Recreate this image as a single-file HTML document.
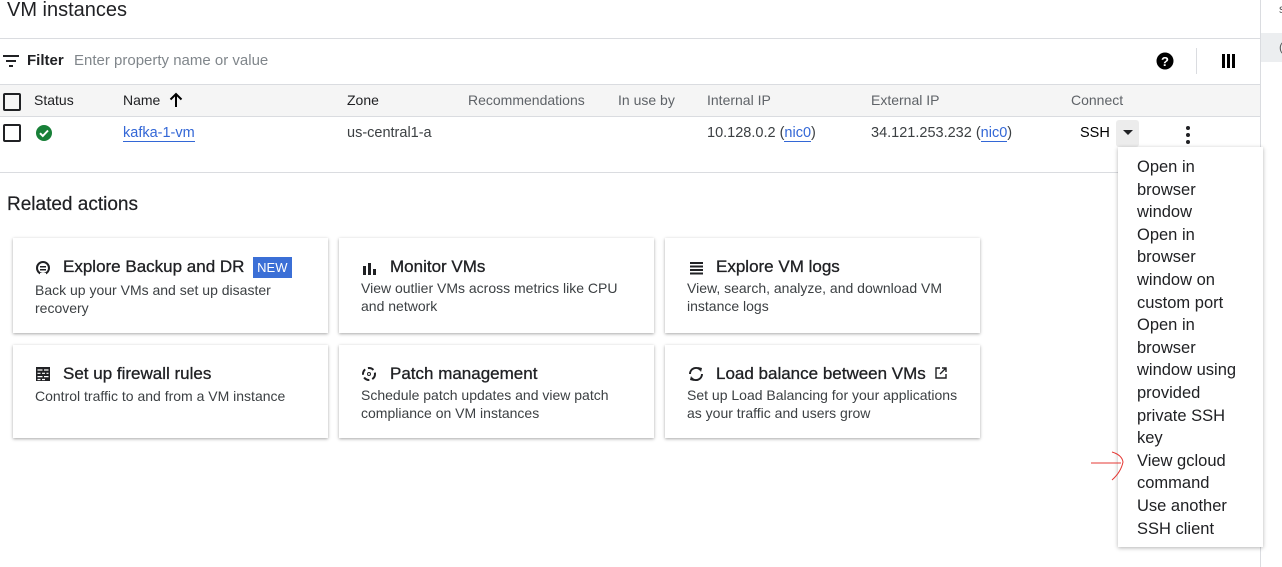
<!DOCTYPE html>
<html><head><meta charset="utf-8"><style>
*{box-sizing:border-box;margin:0;padding:0}
body{width:1282px;height:567px;overflow:hidden;background:#fff;font-family:"Liberation Sans",Arial,sans-serif;color:#202124;position:relative}
.a{position:absolute}
.hl{position:absolute;height:1px;background:#dadce0}
.th{position:absolute;top:92px;font-size:14px;color:#5f6368}
.td{position:absolute;top:125px;font-size:14.5px;color:#3c4043}
.lk{color:#3367d6;border-bottom:1px solid #3367d6}
.card{position:absolute;width:315px;background:#fff;box-shadow:0 1px 3px rgba(0,0,0,.35)}
.card h3{position:absolute;left:50px;top:19px;font-size:17px;font-weight:normal;color:#202124;-webkit-text-stroke:0.3px #202124}
.card p{position:absolute;left:22px;top:42px;font-size:14px;line-height:18px;color:#3c4043;width:260px}
.card svg{position:absolute;left:22px;top:22px}
.cb{position:absolute;width:18px;height:18px;border:2px solid #202124;border-radius:2px}
</style></head><body>
<div class="a" style="left:7px;top:-1px;font-size:20px;color:#202124">VM instances</div>
<div class="hl" style="left:0;top:38px;width:1260px"></div>
<svg class="a" style="left:3px;top:54px" width="16" height="14" viewBox="0 0 16 14"><rect x="0" y="1" width="16" height="2" fill="#202124"/><rect x="3" y="6" width="10" height="2" fill="#202124"/><rect x="6" y="11" width="4" height="2" fill="#202124"/></svg>
<div class="a" style="left:27px;top:52px;font-size:15px;font-weight:bold">Filter</div>
<div class="a" style="left:74px;top:52px;font-size:15px;color:#80868b">Enter property name or value</div>
<svg class="a" style="left:1156px;top:52px" width="18" height="18" viewBox="0 0 18 18"><circle cx="9" cy="9" r="8.5" fill="#000"/><text x="9" y="14" font-size="13" font-weight="bold" fill="#fff" text-anchor="middle" font-family="Liberation Sans">?</text></svg>
<div class="a" style="left:1196px;top:48px;width:1px;height:26px;background:#dadce0"></div>
<div class="a" style="left:1222px;top:54px;width:3px;height:14px;background:#000"></div>
<div class="a" style="left:1227px;top:54px;width:3px;height:14px;background:#000"></div>
<div class="a" style="left:1232px;top:54px;width:3px;height:14px;background:#000"></div>
<div class="a" style="left:0;top:84px;width:1260px;height:33px;background:#f5f5f5;border-top:1px solid #dadce0;border-bottom:1px solid #dadce0"></div>
<div class="cb" style="left:3px;top:93px"></div>
<div class="th" style="left:34px;color:#202124">Status</div>
<div class="th" style="left:123px;color:#202124">Name</div>
<svg class="a" style="left:169px;top:92px" width="14" height="16" viewBox="0 0 14 16"><path d="M7 15V2M1.5 7.5L7 2l5.5 5.5" stroke="#000" stroke-width="2" fill="none"/></svg>
<div class="th" style="left:347px;color:#202124">Zone</div>
<div class="th" style="left:468px">Recommendations</div>
<div class="th" style="left:618px">In use by</div>
<div class="th" style="left:707px">Internal IP</div>
<div class="th" style="left:871px">External IP</div>
<div class="th" style="left:1071px">Connect</div>
<div class="cb" style="left:3px;top:124px"></div>
<svg class="a" style="left:35px;top:124px" width="18" height="18" viewBox="0 0 18 18"><circle cx="9" cy="9" r="8" fill="#188038"/><path d="M5 9.2l2.8 2.8L13 6.5" stroke="#fff" stroke-width="2" fill="none"/></svg>
<div class="td" style="left:123px"><span class="lk">kafka-1-vm</span></div>
<div class="td" style="left:347px">us-central1-a</div>
<div class="td" style="left:707px">10.128.0.2 (<span class="lk">nic0</span>)</div>
<div class="td" style="left:871px">34.121.253.232 (<span class="lk">nic0</span>)</div>
<div class="td" style="left:1080px;color:#000">SSH</div>
<div class="a" style="left:1116px;top:120px;width:23px;height:27px;background:#ececec;border-radius:3px"></div>
<svg class="a" style="left:1123px;top:130px" width="10" height="6"><path d="M0 0h10L5 5z" fill="#202124"/></svg>
<div class="a" style="left:1186px;top:126px;width:4px;height:4px;border-radius:2px;background:#202124"></div>
<div class="a" style="left:1186px;top:133px;width:4px;height:4px;border-radius:2px;background:#202124"></div>
<div class="a" style="left:1186px;top:140px;width:4px;height:4px;border-radius:2px;background:#202124"></div>
<div class="hl" style="left:0;top:172px;width:1260px"></div>
<div class="a" style="left:7px;top:194px;font-size:19px;color:#202124;-webkit-text-stroke:0.2px #202124">Related actions</div>

<div class="card" style="left:13px;top:238px;height:95px"><svg width="16" height="16" viewBox="0 0 16 16"><circle cx="8" cy="8" r="6" stroke="#202124" stroke-width="2" fill="none"/><rect x="5" y="6" width="6" height="1.5" fill="#202124"/><rect x="5" y="9" width="6" height="1.5" fill="#202124"/><rect x="5" y="13" width="6" height="3" fill="#fff"/></svg><h3>Explore Backup and DR <span style="background:#3b6fd6;color:#fff;font-size:13px;padding:3px 4px;margin-left:4px;-webkit-text-stroke:0">NEW</span></h3><p style="top:43px">Back up your VMs and set up disaster recovery</p></div>
<div class="card" style="left:339px;top:238px;height:95px"><svg width="16" height="16" viewBox="0 0 16 16"><rect x="2" y="6" width="3" height="9" fill="#202124"/><rect x="7" y="3" width="3" height="12" fill="#202124"/><rect x="12" y="9" width="3" height="6" fill="#202124"/></svg><h3 style="left:51px">Monitor VMs</h3><p style="top:41px;width:272px">View outlier VMs across metrics like CPU and network</p></div>
<div class="card" style="left:665px;top:238px;height:95px"><svg width="16" height="16" viewBox="0 0 16 16"><rect x="3" y="2" width="13" height="2" fill="#202124"/><rect x="3" y="5.5" width="13" height="2" fill="#202124"/><rect x="3" y="9" width="13" height="2" fill="#202124"/><rect x="3" y="12.5" width="13" height="2" fill="#202124"/></svg><h3 style="left:51px">Explore VM logs</h3><p style="top:41px">View, search, analyze, and download VM instance logs</p></div>

<div class="card" style="left:13px;top:345px;height:93px"><svg width="16" height="16" viewBox="0 0 16 16" style="top:21px"><path d="M1 1h14v14H1z" fill="#202124"/><path d="M2.5 4h5M9 4h4.5M2.5 7.3h3M7 7.3h3M11.5 7.3h2M2.5 10.6h5M9 10.6h4.5M2.5 13.5h3M7 13.5h3" stroke="#fff" stroke-width="1.2"/></svg><h3>Set up firewall rules</h3><p>Control traffic to and from a VM instance</p></div>
<div class="card" style="left:339px;top:345px;height:93px"><svg width="16" height="16" viewBox="0 0 16 16" style="top:21px"><circle cx="8" cy="8" r="6" stroke="#202124" stroke-width="2" fill="none" stroke-dasharray="6 3"/><circle cx="8" cy="8" r="1.5" fill="none" stroke="#202124"/></svg><h3 style="left:51px">Patch management</h3><p style="top:41px">Schedule patch updates and view patch compliance on VM instances</p></div>
<div class="card" style="left:665px;top:345px;height:93px"><svg width="18" height="16" viewBox="0 0 18 16" style="top:21px"><path d="M3 8a6 6 0 0 1 10.5-4M15 8a6 6 0 0 1-10.5 4" stroke="#202124" stroke-width="2" fill="none"/><path d="M11 1l4 1-1 4zM7 15l-4-1 1-4z" fill="#202124"/></svg><h3 style="left:51px">Load balance between VMs <svg width="12" height="12" viewBox="0 0 12 12" style="position:static;margin-left:4px"><path d="M5 1H1v10h10V7M7 1h4v4M11 1L5 7" stroke="#202124" stroke-width="1.4" fill="none"/></svg></h3><p style="top:41px;width:280px">Set up Load Balancing for your applications as your traffic and users grow</p></div>

<div class="a" style="left:1260px;top:0;width:1px;height:567px;background:#dadce0"></div>
<div class="a" style="left:1261px;top:33px;width:21px;height:29px;background:#eceef0"></div>
<div class="a" style="left:1279px;top:2px;font-size:12px;color:#555">s</div>
<div class="a" style="left:1279px;top:40px;font-size:12px;color:#555">(</div>

<div class="a" style="left:1118px;top:147px;width:145px;height:400px;background:#fff;box-shadow:0 1px 4px rgba(0,0,0,.3)"></div>
<div class="a" style="left:1137px;top:156px;font-size:16.5px;line-height:22.6px;color:#202124">Open in<br>browser<br>window<br>Open in<br>browser<br>window on<br>custom port<br>Open in<br>browser<br>window using<br>provided<br>private SSH<br>key<br>View gcloud<br>command<br>Use another<br>SSH client</div>
<svg class="a" style="left:1090px;top:446px" width="45" height="40"><path d="M1 17h30M22 6q10 3 11 10q-2 10-11 18" stroke="#e53935" stroke-width="1" fill="none"/></svg>
</body></html>
